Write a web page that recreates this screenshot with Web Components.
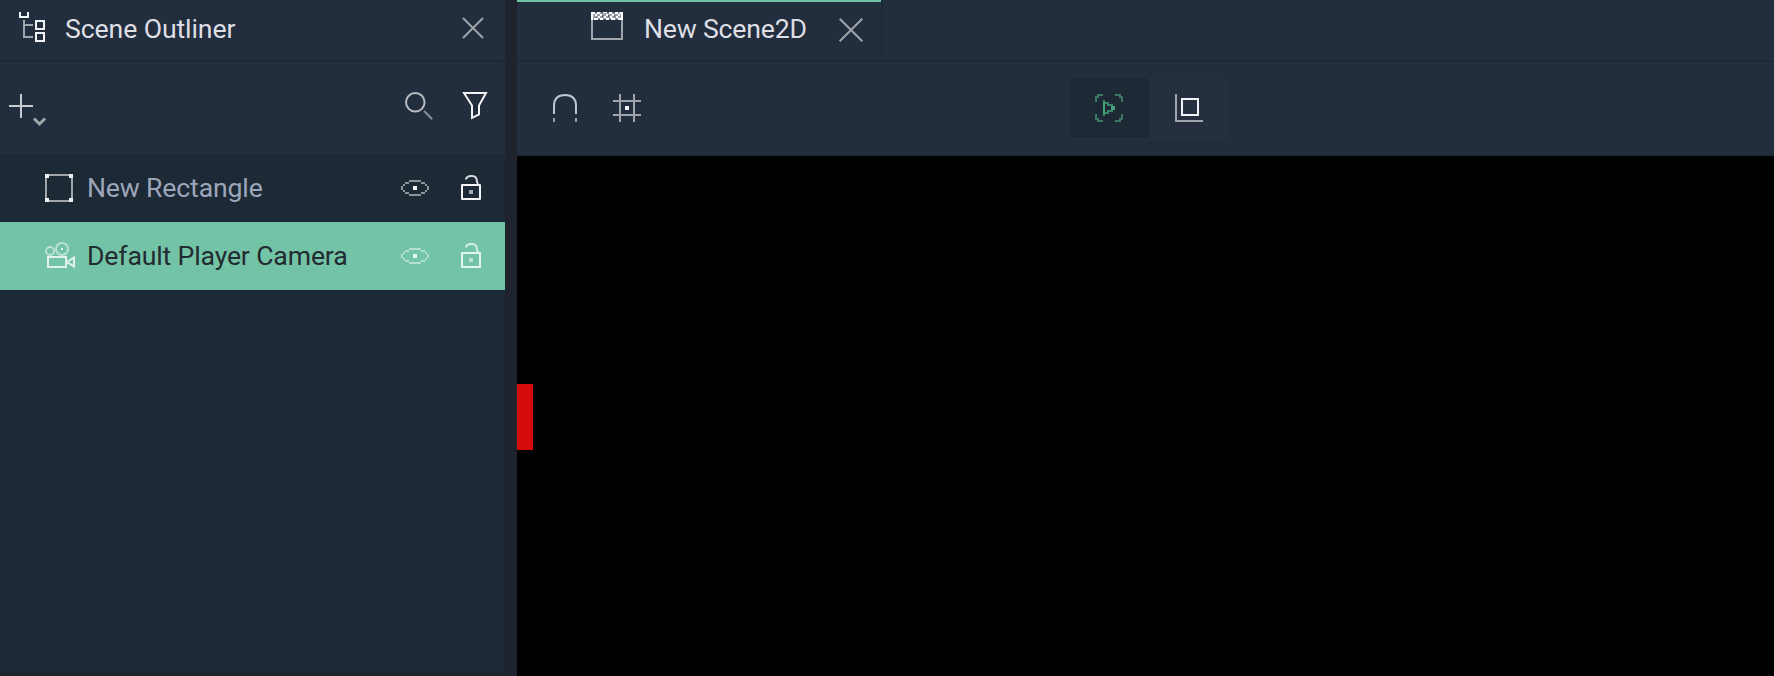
<!DOCTYPE html>
<html lang="en"><head><meta charset="utf-8"><title>Scene editor</title>
<style>
html,body{margin:0;height:100%;background:#1e232e;overflow:hidden;font-family:Roboto,"Liberation Sans",sans-serif}
</style></head><body>
<editor-app></editor-app>
<script>
const define = (name, html) => {
  const t = document.createElement('template');
  t.innerHTML = html;
  customElements.define(name, class extends HTMLElement {
    constructor(){ super(); this.attachShadow({mode:'open'}).append(t.content.cloneNode(true)); }
  });
};

// Each icon: [width, height, markup]; w = bright stroke, g = dim stroke, p = dim pixel fill.
const ICONS = {
  tree:[26,30,'<path class="w" d="M1 0v5h8V0M17 9h8v8h-8zM17 21h8v8h-8z"/><path class="g" d="M14 13H5M14 25H5V8"/>'],
  close:[22,22,'<path class="g" d="M1 1l20 20M21 1L1 21"/>'],
  closeBig:[24,24,'<path class="g" d="M.7.7l22.6 22.6M23.3.7L.7 23.3"/>'],
  add:[37,33,'<path stroke="#c8cbce" d="M0 12h24M12 0v24"/><path stroke="#a3a7ae" stroke-width="3" d="M25 24.5l5.5 5.5 5.5-5.5"/>'],
  search:[28,28,'<circle cx="10.3" cy="10.3" r="9.3" stroke="#babdc1"/><path stroke="#868d96" d="M19 19l8.3 8.3"/>'],
  filter:[24,27,'<path class="w" d="M1 1h22l-7 12.5v9l-7 3.5V13.5z"/>'],
  rect:[28,28,'<path class="g" d="M1 1h26v26H1z"/><path fill="#eef1f6" stroke="none" d="M0 0h4v4H0zM24 0h4v4h-4zM0 24h4v4H0zM24 24h4v4h-4z"/>'],
  camera:[30,26,'<g stroke="#fff"><g opacity=".52"><circle cx="5" cy="9" r="4"/><circle cx="17" cy="7" r="6"/></g><path opacity=".78" d="M3 15h18v10H3zM22 20l7-4.5v9z"/></g><path fill="#eff9f5" stroke="none" d="M16 6h2v2h-2z"/>'],
  eye:[30,16,'<path class="p" d="M9 0h12v2H9zM5 2h4v2H5zM21 2h4v2h-4zM3 4h2v2H3zM25 4h2v2h-2zM1 6h2v4H1zM27 6h2v4h-2zM3 10h2v2H3zM25 10h2v2h-2zM5 12h4v2H5zM21 12h4v2h-4zM9 14h12v2H9z"/><path class="dot" d="M13 6h4v4h-4z"/>'],
  lock:[20,26,'<path class="w" stroke-linejoin="round" d="M1 11h18v14H1z"/><path class="w" opacity=".88" d="M5 5.5V5Q6 2 10 2h1q5 0 5 6l1 2"/><path class="dot" opacity=".62" d="M8 16h4v4H8z"/>'],
  clapper:[32,28,'<path class="g" d="M1 8v19h30V8"/><path fill="#9a9fa7" stroke="none" d="M0 0h32v8H0z"/><path fill="#fff" stroke="none" d="M0 0h4v2H0zM6 0h3v2H6zM12 0h4v1h-4zM18 0h3v2h-3zM24 0h3v2h-3zM29 0h3v2h-3zM0 2h2v6H0zM4 2h2v2H4zM9 2h2v2H9zM7 4h2v2H7zM15 2h2v2h-2zM13 4h2v2h-2zM21 2h2v2h-2zM19 4h2v2h-2zM27 2h2v2h-2zM25 4h2v2h-2zM3 6h4v2H3zM9 6h3v2H9zM15 6h3v2h-3zM20 6h4v2h-4zM27 6h3v2h-3zM30 2h2v6h-2z"/><path fill="#4b535f" stroke="none" d="M4 0h2v1H4zM10 0h2v1h-2zM16 0h2v1h-2zM22 0h2v1h-2zM11 3h1v2h-1zM17 3h1v2h-1zM23 3h1v2h-1zM5 5h1v1H5zM7 7h2v1H7zM13 7h2v1h-2zM18 7h2v1h-2zM25 7h2v1h-2z"/>'],
  magnet:[24,28,'<path stroke="#bdc7d3" d="M1 20V12Q1 1 12 1t11 11v8"/><path stroke="#929ba8" d="M1 24v4M23 24v4"/>'],
  grid:[28,28,'<path class="g" d="M7 0v28M21 0v28M0 7h28M0 21h28"/><path class="dot" d="M12 12h4v4h-4z"/>'],
  play:[28,28,'<path fill="#3a7861" d="M2 0h6v2H4v2H2v4H0V2h2zM20 0h6v2h2v6h-2V4h-2V2h-4zM0 20h2v4h2v2h4v2H2v-2H0zM26 20h2v6h-2v2h-6v-2h4v-2h2z"/><path fill="#48a17e" d="M8 8h2v12H8zM16 12h4v4h-4z"/><path fill="#3a8368" d="M8 6h2v2H8zM10 8h4v2h-4zM12 10h6v2h-6zM12 16h6v2h-6zM10 18h4v2h-4zM8 20h2v2H8z"/>'],
  bounds:[28,28,'<path class="g" d="M1 0v27h27"/><path class="w" d="M7 5h16v16H7z"/>']
};
customElements.define('ui-icon', class extends HTMLElement {
  constructor(){ super(); this.attachShadow({mode:'open'}); }
  connectedCallback(){
    const [w,h,m] = ICONS[this.getAttribute('name')];
    this.shadowRoot.innerHTML = `<style>
      :host{display:block;flex:none;width:${w}px;height:${h}px}
      svg{display:block;overflow:visible;fill:none;stroke-width:2}
      .w{stroke:var(--bright,#f1f3f6)} .g{stroke:var(--dim,#a0a5ac)} .p{fill:var(--dim,#8d939c)} .dot{fill:var(--bright,#f1f3f6);stroke:none}
      </style><svg width="${w}" height="${h}" viewBox="0 0 ${w} ${h}">${m}</svg>`;
  }
});

define('title-bar', `<style>
  :host{display:flex;box-sizing:border-box;height:62px;border-bottom:2px solid #1e2936;background:#222d3d;align-items:flex-start;color:#dedfe5;font-size:26.67px;line-height:32px;letter-spacing:-.12px;white-space:nowrap}
</style><slot></slot>`);

define('tool-bar', `<style>
  :host{display:flex;box-sizing:border-box;height:92px;background:#222d3d;align-items:flex-start;border-radius:0 4px 0 0}
</style><slot></slot>`);

define('scene-tab', `<style>
  :host{display:flex;box-sizing:border-box;width:366px;height:60px;border-right:2px solid #1e2936;padding-left:74px;align-items:flex-start;background:linear-gradient(#73c4a6 2px,transparent 2px)}
  .label{margin:13px 0 0 21px;width:195px;letter-spacing:-.2px}
  .icon{margin-top:12px}.x{margin-top:18px}
</style><ui-icon class="icon" name="clapper"></ui-icon><span class="label"><slot></slot></span><ui-icon class="x" name="closeBig"></ui-icon>`);

define('outliner-row', `<style>
  :host{display:flex;box-sizing:border-box;height:68px;padding-left:45px;color:#9ba6ba;font-size:26.67px;line-height:32px;letter-spacing:-.17px;white-space:nowrap;align-items:flex-start;padding-top:18px}
  :host([selected]){background:#73c4a6;color:#222b31;--bright:#e4f4ee;--dim:#b4dfd0}
  .icon{width:42px;padding-top:2px}.label{flex:none;width:313px}
  .eye{padding:8px 0;margin-right:31px}.lock{margin-top:2px}
</style><div class="icon"><slot name="icon"></slot></div><span class="label"><slot></slot></span><ui-icon class="eye" name="eye"></ui-icon><ui-icon class="lock" name="lock"></ui-icon>`);

define('scene-outliner', `<style>
  :host{display:flex;flex-direction:column;box-sizing:border-box;background:#1e2936;border-bottom:2px solid #1e232e}
  .tree{margin:12px 0 0 19px}.name{margin:13px 0 0 20px;flex:1}.x{margin:17px 21px 0 0}
  .add{margin:32px 0 0 9px}.search{margin:30px 30px 0 auto}.filter{margin:30px 18px 0 0}
</style>
<title-bar><ui-icon class="tree" name="tree"></ui-icon><span class="name">Scene Outliner</span><ui-icon class="x" name="close"></ui-icon></title-bar>
<tool-bar><ui-icon class="add" name="add"></ui-icon><ui-icon class="search" name="search"></ui-icon><ui-icon class="filter" name="filter"></ui-icon></tool-bar>
<outliner-row><ui-icon slot="icon" name="rect"></ui-icon>New Rectangle</outliner-row>
<outliner-row selected><ui-icon slot="icon" name="camera"></ui-icon>Default Player Camera</outliner-row>`);

define('mode-switch', `<style>
  :host{display:grid;grid-template-columns:80px 80px;height:62px;border-radius:8px;overflow:hidden;background:#252f3f}
  div{padding:16px 26px}.on{background:#1e2936;height:28px;border-bottom-left-radius:8px}
</style><div class="on"><ui-icon name="play"></ui-icon></div><div><ui-icon name="bounds"></ui-icon></div>`);

define('scene-viewport', `<style>
  :host{display:flex;flex-direction:column;background:#000}
  .stage{flex:1;padding-top:228px}.shape{width:16px;height:66px;background:#d50a0a}
  tool-bar{height:94px;border-radius:0;border-bottom:2px solid #1e2936}
  .magnet{margin:32px 36px 0}.grid{margin-top:32px}mode-switch{margin:16px 0 0 428px}
</style>
<title-bar><scene-tab>New Scene2D</scene-tab></title-bar>
<tool-bar><ui-icon class="magnet" name="magnet"></ui-icon><ui-icon class="grid" name="grid"></ui-icon><mode-switch></mode-switch></tool-bar>
<div class="stage"><div class="shape"></div></div>`);

define('editor-app', `<style>
  :host{display:grid;grid-template-columns:505px 1fr;column-gap:12px;height:100vh}
</style><scene-outliner></scene-outliner><scene-viewport></scene-viewport>`);
</script></body></html>
